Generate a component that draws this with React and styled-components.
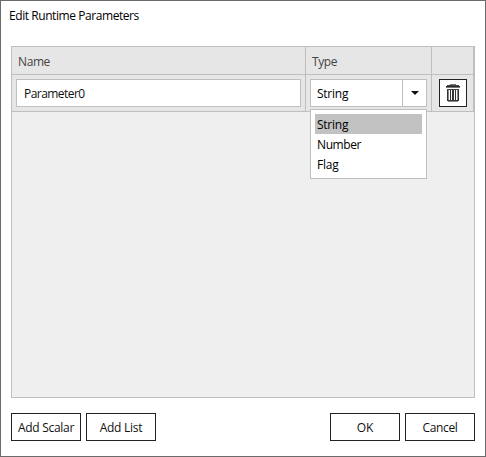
import React from "react";
import styled, { createGlobalStyle } from "styled-components";

const GlobalStyle = createGlobalStyle`
  *, *::before, *::after { box-sizing: border-box; }
  body { margin: 0; background: #fff; }
`;

const Dialog = styled.main`
  width: 486px;
  height: 457px;
  display: flex;
  flex-direction: column;
  padding: 0 10px 15px;
  border: 1px solid #6b6b6b;
  background: #fff;
  color: #111;
  font: 12px/16px "Open Sans", "Noto Sans", sans-serif;
`;

const Label = styled.span`
  display: inline-block;
  white-space: nowrap;
  letter-spacing: ${(p) => p.$track || 0}px;
`;

const Title = styled.h1`
  height: 45px;
  margin: 0 0 0 -2px;
  padding-top: 7px;
  font: inherit;
  color: #000;
`;

const Table = styled.section`
  width: 464px;
  height: 352px;
  border: 1px solid #bfbfbf;
  background: #efefef;
`;

const Row = styled.div`
  display: grid;
  grid-template-columns: 294px 126px 42px;
  height: ${(p) => p.$height}px;
  border-bottom: 1px solid #bfbfbf;
  background: #e6e6e6;
`;

const Cell = styled.div`
  border-right: 1px solid #bfbfbf;
  padding: 4px 4px 0;
`;

const HeaderCell = styled(Cell)`
  padding: 7px 6px 0;
  color: #444;
`;

const ActionCell = styled(Cell)`
  padding-left: 7px;
`;

const Field = styled.div`
  height: 28px;
  padding: 6px 7px 0;
  border: 1px solid #bfbfbf;
  background: #fff;
`;

const Combo = styled.div`
  position: relative;
  display: flex;
  width: 117px;
  height: 28px;
  border: 1px solid #bfbfbf;
  background: #fff;
`;

const ComboValue = styled.div`
  flex: 1;
  padding: 6px 0 0 6px;
  color: #000;
`;

const ComboToggle = styled.div`
  width: 24px;
  display: grid;
  place-items: center;
  border-left: 1px solid #bfbfbf;
`;

const Menu = styled.ul`
  position: absolute;
  z-index: 1;
  top: 29px;
  left: -1px;
  width: 117px;
  height: 70px;
  margin: 0;
  padding: 4px;
  list-style: none;
  border: 1px solid #bfbfbf;
  background: #fff;
`;

const MenuItem = styled.li`
  height: 20px;
  padding: 3px 2px 0;
  color: #000;
  background: ${(p) => (p.$selected ? "#c2c2c2" : "transparent")};
`;

const Button = styled.button`
  width: 70px;
  height: 28px;
  padding: 6px 0 4px;
  border: 1px solid #222;
  border-radius: 0;
  background: #fff;
  color: #111;
  font: inherit;
  text-align: center;
`;

const IconButton = styled(Button)`
  width: 28px;
  display: flex;
  justify-content: center;
  padding: 4px 0;
`;

const Footer = styled.footer`
  display: flex;
  justify-content: space-between;
  width: 464px;
  margin-top: 15px;
`;

const Group = styled.div`
  display: flex;
  gap: 5px;
`;

const TrashIcon = () => (
  <svg width="14" height="18" viewBox="0 0 14 18" shapeRendering="crispEdges">
    <path d="M4 0h6v1H4z" fill="#777" />
    <path d="M1 1h12v1H1z" fill="#444" />
    <path d="M0 2h14v1H0z" fill="#2a2a2a" />
    <path d="M0 3h14v1H0z" fill="#777" />
    <path d="M1 5h12v1H1z" fill="#444" />
    <path d="M1 6h1v11H1zM12 6h1v11h-1zM4 6h1v11H4zM6 6h2v11H6zM9 6h1v11H9z" fill="#333" />
    <path d="M2 6h1v11H2zM11 6h1v11h-1z" fill="#888" />
    <path d="M2 16h10v1H2z" fill="#333" />
    <path d="M2 17h10v1H2z" fill="#888" />
  </svg>
);

const Caret = () => (
  <svg width="8" height="4" viewBox="0 0 8 4">
    <path d="M0 0h8L4 4z" fill="#111" />
  </svg>
);

const types = [
  { name: "String", track: -0.25 },
  { name: "Number", track: -0.4 },
  { name: "Flag", track: -0.25 },
];

export default function App() {
  return (
    <>
      <GlobalStyle />
      <Dialog>
        <Title><Label $track={-0.43}>Edit Runtime Parameters</Label></Title>
        <Table>
          <Row $height={28}>
            <HeaderCell><Label $track={-0.4}>Name</Label></HeaderCell>
            <HeaderCell><Label $track={-0.4}>Type</Label></HeaderCell>
            <HeaderCell />
          </Row>
          <Row $height={37}>
            <Cell>
              <Field><Label $track={-0.55}>Parameter0</Label></Field>
            </Cell>
            <Cell>
              <Combo>
                <ComboValue><Label $track={-0.25}>String</Label></ComboValue>
                <ComboToggle><Caret /></ComboToggle>
                <Menu>
                  {types.map(({ name, track }, i) => (
                    <MenuItem key={name} $selected={i === 0}>
                      <Label $track={track}>{name}</Label>
                    </MenuItem>
                  ))}
                </Menu>
              </Combo>
            </Cell>
            <ActionCell>
              <IconButton aria-label="Delete parameter"><TrashIcon /></IconButton>
            </ActionCell>
          </Row>
        </Table>
        <Footer>
          <Group>
            <Button><Label $track={-0.28}>Add Scalar</Label></Button>
            <Button><Label $track={-0.25}>Add List</Label></Button>
          </Group>
          <Group>
            <Button><Label>OK</Label></Button>
            <Button><Label $track={-0.35}>Cancel</Label></Button>
          </Group>
        </Footer>
      </Dialog>
    </>
  );
}
